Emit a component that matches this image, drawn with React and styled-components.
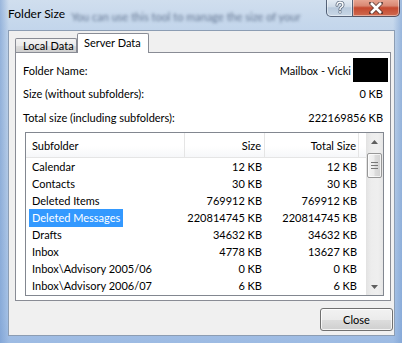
import React from "react";
import styled, { createGlobalStyle } from "styled-components";

const GlobalStyle = createGlobalStyle`
  html, body { margin: 0; padding: 0; overflow: hidden; }
  body {
    font-family: "Lato", "Liberation Sans", sans-serif;
    font-size: 11px;
    color: #000;
  }
`;

const Window = styled.div`
  width: 402px;
  height: 343px;
  box-sizing: border-box;
  display: flex;
  flex-direction: column;
  background:
    linear-gradient(90deg, rgba(110, 150, 205, 0.55) 0, rgba(110, 150, 205, 0) 9px, rgba(110, 150, 205, 0) 393px, rgba(110, 150, 205, 0.5) 402px),
    linear-gradient(180deg, #d0deee 0%, #c2d5eb 9%, #b6cce7 50%, #a6c2e6 92%, #9dbbe3 100%);
`;

const TitleBar = styled.div`
  height: 30px;
  flex: none;
  display: flex;
  align-items: flex-start;
  padding: 0 2px 0 8px;
`;

const Title = styled.span`
  padding-top: 6px;
  font-size: 12px;
  white-space: nowrap;
`;

const GlassText = styled.span`
  margin: 10px 0 0 6px;
  white-space: nowrap;
  color: rgba(25, 45, 80, 0.6);
  filter: blur(1.4px);
`;

const CaptionGroup = styled.div`
  display: flex;
  margin: -1px 0 0 auto;
`;

const CaptionButton = styled.div`
  width: ${(p) => p.w}px;
  height: 18px;
  box-sizing: border-box;
  border: 1px solid rgba(40, 55, 80, 0.75);
  border-top: none;
  display: flex;
  align-items: center;
  justify-content: center;
  box-shadow: inset 0 0 0 1px rgba(255, 255, 255, 0.45);
  background: ${(p) =>
    p.danger
      ? "linear-gradient(180deg, #e9a996 0%, #d98873 40%, #c5492f 52%, #cf6a50 100%)"
      : "linear-gradient(180deg, #e6edf5 0%, #cfdbe8 45%, #b8c9dc 52%, #c9d7e6 100%)"};
  border-radius: ${(p) => (p.danger ? "0 0 5px 0" : "0 0 0 5px")};
  ${(p) => p.danger && "border-left: none;"}
`;

const Client = styled.div`
  flex: 1;
  margin: 0 7px 7px 8px;
  box-sizing: border-box;
  border: 1px solid #8c9db3;
  background: #f0f0f0;
  display: flex;
  flex-direction: column;
`;

const TabStrip = styled.div`
  height: 19px;
  padding: 2px 0 0 6px;
  display: flex;
  align-items: flex-end;
`;

const Tab = styled.div`
  box-sizing: border-box;
  width: ${(p) => p.w}px;
  height: ${(p) => (p.active ? 20 : 14)}px;
  margin-bottom: ${(p) => (p.active ? -1 : 0)}px;
  padding-left: ${(p) => (p.active ? 6 : 7)}px;
  border: 1px solid #898c95;
  border-bottom: none;
  border-radius: 2px 2px 0 0;
  position: relative;
  z-index: ${(p) => (p.active ? 1 : 0)};
  background: ${(p) =>
    p.active
      ? "#fff"
      : "linear-gradient(180deg, #f3f3f3 0%, #ebebeb 50%, #dddddd 51%, #cfcfcf 100%)"};
  line-height: ${(p) => (p.active ? 18 : 14)}px;
  white-space: nowrap;
`;

const Panel = styled.div`
  width: 376px;
  height: 249px;
  margin-left: 6px;
  box-sizing: border-box;
  border: 1px solid #898c95;
  background: #fff;
  padding: 5px 7px 4px 7px;
  display: flex;
  flex-direction: column;
`;

const InfoRow = styled.div`
  height: ${(p) => p.h}px;
  display: flex;
  align-items: center;
  justify-content: space-between;
`;

const Value = styled.span`
  display: flex;
  align-items: center;
  gap: 2px;
`;

const Redacted = styled.span`
  width: 35px;
  height: 24px;
  margin-right: -5px;
  background: #000;
`;

const ListBox = styled.div`
  margin: 3px 0 0 2px;
  width: 359px;
  height: 164px;
  box-sizing: border-box;
  border: 1px solid #828790;
  display: flex;
  overflow: hidden;
`;

const Table = styled.div`
  flex: 1;
  display: grid;
  grid-template-columns: 159px 80px 94px 1fr;
  grid-template-rows: 25px;
  grid-auto-rows: 17px;
  align-content: start;
`;

const HeaderCell = styled.div`
  box-sizing: border-box;
  border-bottom: 1px solid #e5e5e5;
  border-right: ${(p) => (p.last ? "none" : "1px solid #e5e5e5")};
  background: linear-gradient(180deg, #ffffff 55%, #f6f7f9 100%);
  display: flex;
  align-items: center;
  justify-content: ${(p) => (p.right ? "flex-end" : "flex-start")};
  padding: ${(p) => (p.right ? `0 ${p.pr}px 0 0` : "0 0 0 6px")};
`;

const Cell = styled.div`
  display: flex;
  align-items: center;
  justify-content: ${(p) => (p.right ? "flex-end" : "flex-start")};
  padding: ${(p) => (p.right ? `0 ${p.pr}px 0 0` : "0 0 0 6px")};
  white-space: nowrap;
`;

const Selected = styled.span`
  background: #3399ff;
  color: #fff;
  margin-left: -3px;
  padding: 0 3px;
  line-height: 18px;
`;

const ScrollBar = styled.div`
  width: 17px;
  flex: none;
  display: flex;
  flex-direction: column;
  background: linear-gradient(90deg, #e2e2e2 0%, #ededed 30%, #efefef 70%, #e6e6e6 100%);
`;

const ArrowButton = styled.div`
  height: 17px;
  display: flex;
  align-items: center;
  justify-content: center;
  ${(p) => p.bottom && "margin-top: auto;"}
`;

const Thumb = styled.div`
  margin: 3px 1px 0 1px;
  height: 25px;
  box-sizing: border-box;
  border: 1px solid #979797;
  border-radius: 2px;
  background: linear-gradient(90deg, #f4f4f4 0%, #ececec 45%, #dcdcdc 55%, #d2d2d2 100%);
  box-shadow: inset 0 0 0 1px rgba(255, 255, 255, 0.7);
  display: flex;
  align-items: center;
  justify-content: center;
`;

const Footer = styled.div`
  display: flex;
  justify-content: flex-end;
  padding: 7px 1px 0 0;
`;

const Button = styled.button`
  width: 73px;
  height: 23px;
  box-sizing: border-box;
  border: 1px solid #707070;
  border-radius: 3px;
  background: linear-gradient(180deg, #f2f2f2 0%, #ebebeb 50%, #dddddd 51%, #cfcfcf 100%);
  box-shadow: inset 0 0 0 1px rgba(255, 255, 255, 0.75);
  font: inherit;
  color: #000;
  padding: 0;
`;

const rows = [
  ["Calendar", "12 KB", "12 KB"],
  ["Contacts", "30 KB", "30 KB"],
  ["Deleted Items", "769912 KB", "769912 KB"],
  ["Deleted Messages", "220814745 KB", "220814745 KB", true],
  ["Drafts", "34632 KB", "34632 KB"],
  ["Inbox", "4778 KB", "13627 KB"],
  ["Inbox\\Advisory 2005/06", "0 KB", "0 KB"],
  ["Inbox\\Advisory 2006/07", "6 KB", "6 KB"],
];

const Arrow = ({ down }) => (
  <svg width="7" height="4" viewBox="0 0 7 4">
    <path d={down ? "M0 0h7L3.5 4z" : "M0 4h7L3.5 0z"} fill="#5f5f5f" />
  </svg>
);

const Grip = () => (
  <svg width="7" height="7" viewBox="0 0 7 7">
    <path d="M0 .5h7M0 3.5h7M0 6.5h7" stroke="#777" strokeWidth="1" />
  </svg>
);

const HelpGlyph = () => (
  <svg width="10" height="13" viewBox="0 0 10 13">
    <g fill="none" strokeLinecap="round">
      <path d="M2 4.2C2 2.3 3.3 1.3 5 1.3s3 1 3 2.6c0 1.4-1 2-2 2.6-.7.4-1 .8-1 1.7v.5" stroke="#3a4a60" strokeWidth="3" opacity="0.75" />
      <path d="M2 4.2C2 2.3 3.3 1.3 5 1.3s3 1 3 2.6c0 1.4-1 2-2 2.6-.7.4-1 .8-1 1.7v.5" stroke="#fff" strokeWidth="1.4" />
    </g>
    <circle cx="5" cy="11" r="1.6" fill="#3a4a60" opacity="0.75" />
    <circle cx="5" cy="11" r="0.9" fill="#fff" />
  </svg>
);

const CloseGlyph = () => (
  <svg width="14" height="12" viewBox="0 0 14 12">
    <path d="M2 1l10 10M12 1L2 11" stroke="#3a2a2a" strokeWidth="4.4" strokeLinecap="square" opacity="0.7" />
    <path d="M2 1l10 10M12 1L2 11" stroke="#fff" strokeWidth="2.6" />
  </svg>
);

export default function App() {
  return (
    <>
      <GlobalStyle />
      <Window>
        <TitleBar>
          <Title>Folder Size</Title>
          <GlassText>You can use this tool to manage the size of your</GlassText>
          <CaptionGroup>
            <CaptionButton w={27}>
              <HelpGlyph />
            </CaptionButton>
            <CaptionButton w={47} danger>
              <CloseGlyph />
            </CaptionButton>
          </CaptionGroup>
        </TitleBar>
        <Client>
          <TabStrip>
            <Tab w={62}>Local Data</Tab>
            <Tab w={72} active>
              Server Data
            </Tab>
          </TabStrip>
          <Panel>
            <InfoRow h={24}>
              <span>Folder Name:</span>
              <Value>
                Mailbox - Vicki
                <Redacted />
              </Value>
            </InfoRow>
            <InfoRow h={23}>
              <span>Size (without subfolders):</span>
              <span>0 KB</span>
            </InfoRow>
            <InfoRow h={24}>
              <span>Total size (including subfolders):</span>
              <span>222169856 KB</span>
            </InfoRow>
            <ListBox>
              <Table>
                <HeaderCell>Subfolder</HeaderCell>
                <HeaderCell right pr={3}>Size</HeaderCell>
                <HeaderCell right pr={2}>Total Size</HeaderCell>
                <HeaderCell last />
                {rows.map(([name, size, total, sel]) => (
                  <React.Fragment key={name}>
                    <Cell>{sel ? <Selected>{name}</Selected> : name}</Cell>
                    <Cell right pr={3}>{size}</Cell>
                    <Cell right pr={2}>{total}</Cell>
                    <Cell />
                  </React.Fragment>
                ))}
              </Table>
              <ScrollBar>
                <ArrowButton>
                  <Arrow />
                </ArrowButton>
                <Thumb>
                  <Grip />
                </Thumb>
                <ArrowButton bottom>
                  <Arrow down />
                </ArrowButton>
              </ScrollBar>
            </ListBox>
          </Panel>
          <Footer>
            <Button>Close</Button>
          </Footer>
        </Client>
      </Window>
    </>
  );
}
